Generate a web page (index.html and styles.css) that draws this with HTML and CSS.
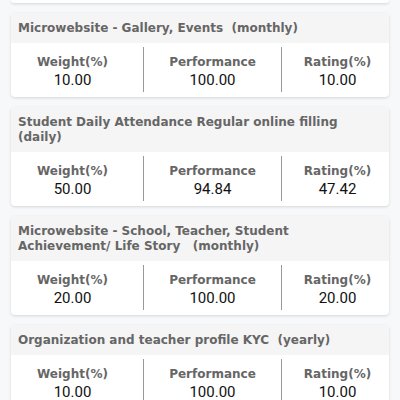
FILE: index.html
```html
<!DOCTYPE html>
<html lang="en">

<head>
    <meta charset="UTF-8">
    <meta name="viewport" content="width=device-width, initial-scale=1.0">
    <title>Performance</title>
    <link rel="stylesheet" href="styles.css">
</head>

<body>
    <div id="list">
        <div class="card tail"></div>

        <div class="card">
            <div class="card-head">Microwebsite - Gallery, Events&nbsp; (monthly)</div>
            <div class="card-body">
                <div class="col"><span class="label">Weight(%)</span><span class="value">10.00</span></div>
                <div class="col"><span class="label">Performance</span><span class="value">100.00</span></div>
                <div class="col"><span class="label">Rating(%)</span><span class="value">10.00</span></div>
            </div>
        </div>

        <div class="card">
            <div class="card-head">Student Daily Attendance Regular online filling (daily)</div>
            <div class="card-body">
                <div class="col"><span class="label">Weight(%)</span><span class="value">50.00</span></div>
                <div class="col"><span class="label">Performance</span><span class="value">94.84</span></div>
                <div class="col"><span class="label">Rating(%)</span><span class="value">47.42</span></div>
            </div>
        </div>

        <div class="card">
            <div class="card-head">Microwebsite - School, Teacher, Student Achievement/ Life Story&nbsp;&nbsp; (monthly)</div>
            <div class="card-body">
                <div class="col"><span class="label">Weight(%)</span><span class="value">20.00</span></div>
                <div class="col"><span class="label">Performance</span><span class="value">100.00</span></div>
                <div class="col"><span class="label">Rating(%)</span><span class="value">20.00</span></div>
            </div>
        </div>

        <div class="card">
            <div class="card-head">Organization and teacher profile KYC&nbsp; (yearly)</div>
            <div class="card-body">
                <div class="col"><span class="label">Weight(%)</span><span class="value">10.00</span></div>
                <div class="col"><span class="label">Performance</span><span class="value">100.00</span></div>
                <div class="col"><span class="label">Rating(%)</span><span class="value">10.00</span></div>
            </div>
        </div>
    </div>
</body>

</html>
```

FILE: styles.css
```css
* {
    box-sizing: border-box;
}

body {
    margin: 0;
    background-color: #f7f8fa;
    font-family: "DejaVu Sans", sans-serif;
}

#list {
    display: flex;
    flex-direction: column;
    gap: 10px;
    padding: 0 11px;
}

.card {
    background-color: #fff;
    border-radius: 4px;
    box-shadow: 0 1px 3px rgba(0, 0, 0, 0.14);
    overflow: hidden;
}

.card.tail {
    height: 3px;
    border-radius: 0 0 4px 4px;
}

.card-head {
    background-color: #f5f5f5;
    color: #666;
    font-size: 12px;
    font-weight: bold;
    line-height: 15px;
    padding: 8px 7px 7px;
}

.card-body {
    display: grid;
    grid-template-columns: 132px 138px 1fr;
    padding: 4px 0 5px;
}

.col {
    display: flex;
    flex-direction: column;
    align-items: center;
    padding: 6px 0 2px;
}

.col:first-child {
    padding-right: 9px;
}

.col+.col {
    border-left: 1px solid #999;
}

.col:last-child {
    padding-left: 4px;
}

.label {
    color: #666;
    font-size: 12px;
    font-weight: bold;
    line-height: 18px;
}

.value {
    color: #111;
    font-family: Roboto, sans-serif;
    font-size: 15px;
    line-height: 19px;
}
```
